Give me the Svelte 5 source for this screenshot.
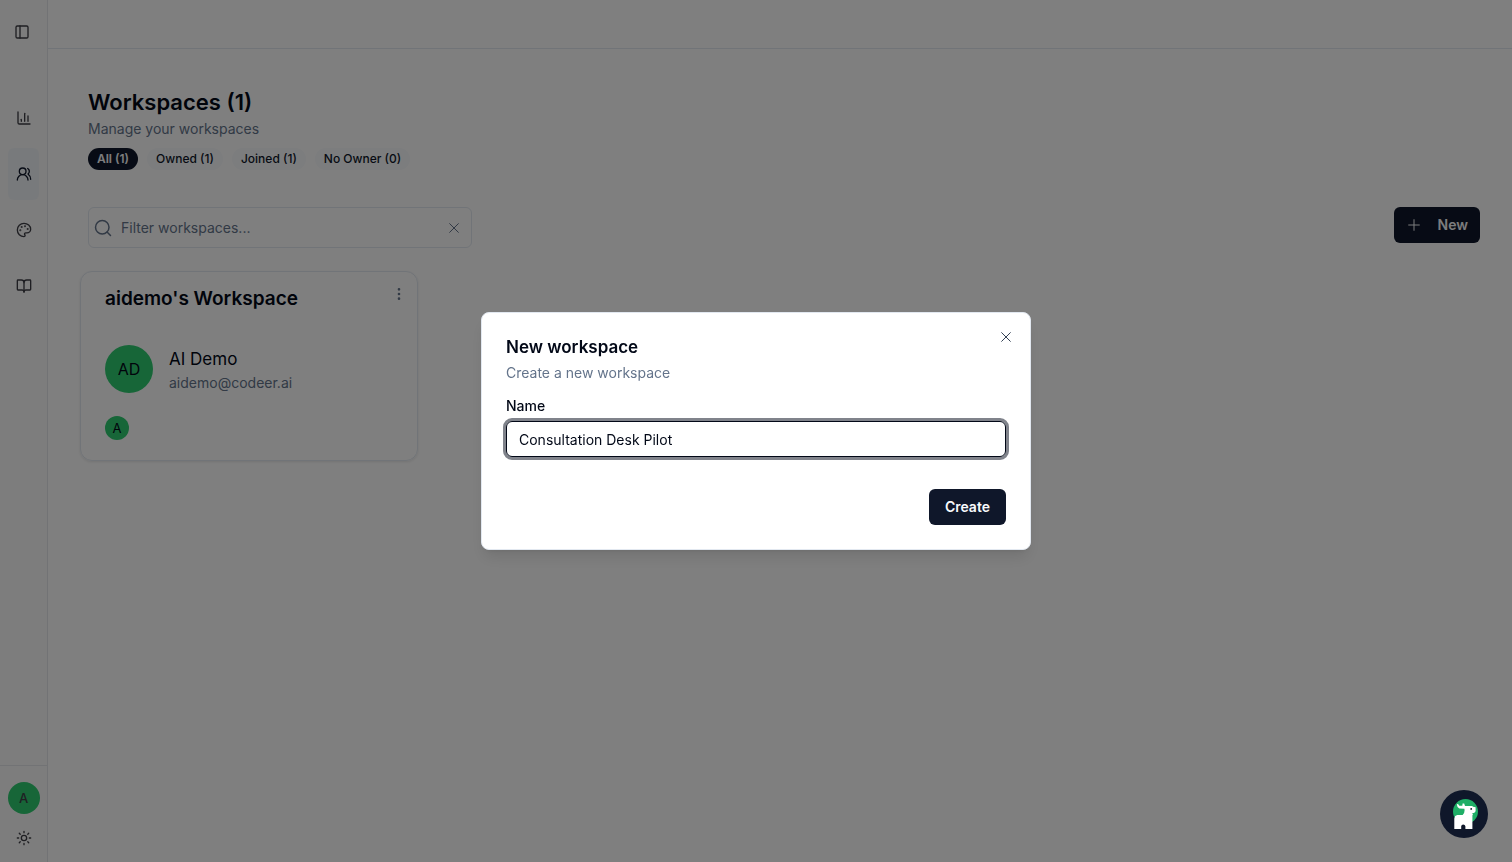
<script lang="ts">
    let filter = $state('');
    let name = $state('Consultation Desk Pilot');
    let open = $state(true);
    let active = $state('all');

    const chips = [
        { id: 'all', label: 'All', count: 1 },
        { id: 'owned', label: 'Owned', count: 1 },
        { id: 'joined', label: 'Joined', count: 1 },
        { id: 'none', label: 'No Owner', count: 0 },
    ];
</script>

{#snippet cross()}
    <svg class="icon thin" viewBox="0 0 24 24" aria-hidden="true"><path d="M18.500 5.500 5.500 18.500" /><path d="m5.500 5.500 13 13" /></svg>
{/snippet}

<div class="app">
    <aside class="sidebar">
        <button class="toggle" aria-label="Toggle sidebar">
            <svg class="icon" viewBox="0 0 24 24"><rect x="3" y="3" width="18" height="18" rx="2" /><path d="M9 3v18" /></svg>
        </button>
        <nav>
            <a href="#analytics" aria-label="Analytics">
                <svg class="icon" viewBox="0 0 24 24"><path d="M3 3v16a2 2 0 0 0 2 2h16" /><path d="M8 17v-3" /><path d="M13 17V5" /><path d="M18 17V9" /></svg>
            </a>
            <a href="#workspaces" class="current" aria-label="Workspaces">
                <svg class="icon" viewBox="0 0 24 24"><path d="M18 21a8 8 0 0 0-16 0" /><circle cx="10" cy="8" r="5" /><path d="M22 20c0-3.370-2-6.500-4-8a5 5 0 0 0-.450-8.300" /></svg>
            </a>
            <a href="#theme" aria-label="Appearance">
                <svg class="icon" viewBox="0 0 24 24"><g class="dots"><circle cx="13.500" cy="6.500" r=".5" /><circle cx="17.500" cy="10.500" r=".5" /><circle cx="8.500" cy="7.500" r=".5" /><circle cx="6.500" cy="12.500" r=".5" /></g><path d="M12 2C6.500 2 2 6.500 2 12s4.500 10 10 10c.926 0 1.648-.746 1.648-1.688 0-.437-.180-.835-.437-1.125-.290-.289-.438-.652-.438-1.125a1.640 1.640 0 0 1 1.668-1.668h1.996c3.051 0 5.555-2.503 5.555-5.554C21.965 6.012 17.461 2 12 2z" /></svg>
            </a>
            <a href="#docs" aria-label="Documentation">
                <svg class="icon" viewBox="0 0 24 24"><path d="M12 7v14" /><path d="M3 18a1 1 0 0 1-1-1V4a1 1 0 0 1 1-1h5a4 4 0 0 1 4 4 4 4 0 0 1 4-4h5a1 1 0 0 1 1 1v13a1 1 0 0 1-1 1h-6a3 3 0 0 0-3 3 3 3 0 0 0-3-3z" /></svg>
            </a>
        </nav>
        <footer>
            <button class="avatar medium" aria-label="Account">A</button>
            <button class="plain" aria-label="Toggle theme">
                <svg class="icon" viewBox="0 0 24 24"><circle cx="12" cy="12" r="4" /><path d="M12 2v2M12 20v2M4.930 4.930l1.410 1.410M17.660 17.660l1.410 1.410M2 12h2M20 12h2M6.340 17.660l-1.410 1.410M19.070 4.930l-1.410 1.410" /></svg>
            </button>
        </footer>
    </aside>

    <div class="page">
        <header class="topbar"></header>
        <main>
            <h1>Workspaces (1)</h1>
            <p class="subtitle">Manage your workspaces</p>
            <div class="chips">
                {#each chips as chip (chip.id)}
                    <button class="chip" class:selected={active === chip.id} onclick={() => (active = chip.id)}>{chip.label} ({chip.count})</button>
                {/each}
            </div>

            <div class="toolbar">
                <div class="search">
                    <svg class="icon large" viewBox="0 0 24 24"><circle cx="11" cy="11" r="9" /><path d="m22 22-4.600-4.600" /></svg>
                    <input type="text" placeholder="Filter workspaces..." aria-label="Filter workspaces" bind:value={filter} />
                    <button class="plain" aria-label="Clear filter" onclick={() => (filter = '')}>{@render cross()}</button>
                </div>
                <button class="primary new" onclick={() => (open = true)}>
                    <svg class="icon thin" viewBox="0 0 24 24"><path d="M4 12h16" /><path d="M12 4v16" /></svg>
                    New
                </button>
            </div>

            <div class="cards">
                <article class="card">
                    <div class="card-head">
                        <h2>aidemo's Workspace</h2>
                        <button class="plain more" aria-label="Workspace options">
                            <svg class="icon" viewBox="0 0 24 24"><circle cx="12" cy="12" r="1" /><circle cx="12" cy="5" r="1" /><circle cx="12" cy="19" r="1" /></svg>
                        </button>
                    </div>
                    <div class="owner">
                        <span class="avatar big">AD</span>
                        <div>
                            <p class="owner-name">AI Demo</p>
                            <p class="subtitle">aidemo@codeer.ai</p>
                        </div>
                    </div>
                    <span class="avatar small">A</span>
                </article>
            </div>
        </main>
    </div>
</div>

{#if open}
    <div class="overlay">
        <div class="dialog" role="dialog" aria-modal="true" aria-labelledby="dialog-title">
            <h2 id="dialog-title">New workspace</h2>
            <p class="subtitle">Create a new workspace</p>
            <form onsubmit={(e) => e.preventDefault()}>
                <label for="workspace-name">Name</label>
                <input id="workspace-name" type="text" autocomplete="off" spellcheck="false" bind:value={name} />
                <button class="primary create" type="submit">Create</button>
            </form>
            <button class="plain close" aria-label="Close" onclick={() => (open = false)}>{@render cross()}</button>
        </div>
    </div>
{/if}

<button class="chat" aria-label="Open chat">
    <svg viewBox="0 0 48 48">
        <circle cx="25.500" cy="21.500" r="12.500" fill="#1fae66" />
        <path fill="#fff" d="M16.800 14.300 18 14 19.400 15.800 22.300 15.800 22.600 13.400 24.200 13.400 25 16H32.200L33 16.800 35.600 17.300V21.300L34.400 22.700 31.700 23.400 33 24 32.400 25.500V39H25.400V36.200Q25 34.600 23.200 34.600 21.400 34.600 21.200 36.200V39H14.300V28.500Q14.600 25.600 17.300 25.100L22.600 24.900Q24.600 23.500 24.600 20.300L24.400 18.800 19.300 18.400Q17 17.500 16.800 14.300Z" />
        <circle cx="31.200" cy="18.900" r=".9" fill="#0f172a" />
    </svg>
</button>

<style>
    :global(body) {
        margin: 0;
        background: #fff;
        color: #020817;
        font-family: Inter, 'Liberation Sans', sans-serif;
        font-size: 14px;
        line-height: 20px;
    }
    h1, h2, p {
        margin: 0;
    }
    button, input {
        font: inherit;
        color: inherit;
        box-sizing: border-box;
    }
    button {
        padding: 0;
        border: 0;
        background: none;
        cursor: pointer;
    }
    .icon {
        display: block;
        width: 16px;
        height: 16px;
        flex: none;
        fill: none;
        stroke: currentColor;
        stroke-width: 2;
        stroke-linecap: round;
        stroke-linejoin: round;
    }
    .icon.large {
        width: 18px;
        height: 18px;
    }
    .icon.thin {
        stroke-width: 1.5;
    }
    .dots {
        fill: currentColor;
    }
    .app {
        display: flex;
        min-height: 100vh;
    }

    /* sidebar */
    .sidebar {
        box-sizing: border-box;
        width: 48px;
        flex: none;
        display: flex;
        flex-direction: column;
        background: #fafafa;
        border-right: 1px solid #e5e7eb;
        color: #3f3f46;
    }
    .toggle {
        display: grid;
        place-items: center;
        width: 28px;
        height: 28px;
        margin: 18px 8px 46px;
    }
    nav {
        display: flex;
        flex-direction: column;
        gap: 4px;
        padding: 0 8px;
        flex: 1;
    }
    nav a {
        display: grid;
        place-items: center;
        height: 52px;
        border-radius: 6px;
        color: inherit;
    }
    nav a.current {
        background: #f1f5f9;
        color: #0f172a;
    }
    footer {
        display: flex;
        flex-direction: column;
        align-items: center;
        gap: 16px;
        padding: 16px 0;
        border-top: 1px solid #e5e7eb;
    }
    .avatar {
        display: grid;
        place-items: center;
        flex: none;
        border-radius: 50%;
        background: #2ecc71;
        color: #020817;
    }
    .medium {
        width: 32px;
        height: 32px;
        color: #3f3f46;
        font-size: 13px;
        font-weight: 500;
    }
    .big {
        width: 48px;
        height: 48px;
        font-size: 16px;
    }
    .small {
        width: 24px;
        height: 24px;
        font-size: 13px;
    }

    /* page */
    .page {
        flex: 1;
        min-width: 0;
    }
    .topbar {
        height: 48px;
        border-bottom: 1px solid #e2e8f0;
    }
    main {
        padding: 37px 32px 32px 40px;
    }
    h1 {
        font-size: 22px;
        line-height: 32px;
        font-weight: 600;
    }
    .subtitle {
        color: #64748b;
    }
    h1 + .subtitle {
        margin-top: 1px;
    }
    .chips {
        display: flex;
        gap: 9px;
        margin-top: 9px;
    }
    .chip {
        height: 22px;
        padding: 0 9px;
        border-radius: 11px;
        background: #f8fafc;
        color: #0f172a;
        font-size: 12px;
        line-height: 16px;
        font-weight: 500;
    }
    .chip.selected {
        background: #0f172a;
        color: #f8fafc;
        font-weight: 600;
    }
    .toolbar {
        display: flex;
        justify-content: space-between;
        align-items: flex-start;
        margin-top: 37px;
    }
    .search {
        box-sizing: border-box;
        display: flex;
        align-items: center;
        gap: 9px;
        width: 384px;
        height: 41px;
        padding: 0 9px 0 5px;
        border: 1px solid #e2e8f0;
        border-radius: 6px;
        color: #64748b;
    }
    .search input {
        flex: 1;
        min-width: 0;
        padding: 0;
        border: 0;
        outline: none;
        background: none;
    }
    .search input::placeholder {
        color: #64748b;
        opacity: 1;
    }
    .primary {
        display: flex;
        align-items: center;
        height: 36px;
        border-radius: 6px;
        background: #0f172a;
        color: #f8fafc;
        font-weight: 600;
    }
    .new {
        gap: 16px;
        padding: 0 12px;
    }
    .cards {
        display: flex;
        flex-wrap: wrap;
        margin: 23px -8px 0;
    }
    .card {
        box-sizing: border-box;
        width: 338px;
        padding: 12px 24px 20px;
        border: 1px solid #e2e8f0;
        border-radius: 12px;
        box-shadow: 0 1px 3px rgba(0, 0, 0, 0.1);
    }
    .card-head {
        display: flex;
        justify-content: space-between;
        align-items: flex-start;
    }
    .card h2 {
        font-size: 19px;
        line-height: 30px;
        font-weight: 600;
    }
    .more {
        margin: 2px -14px 0 0;
        color: #64748b;
    }
    .owner {
        display: flex;
        align-items: center;
        gap: 16px;
        margin: 31px 0 23px;
    }
    .owner-name {
        font-size: 17px;
        line-height: 28px;
    }

    /* dialog */
    .overlay {
        position: fixed;
        inset: 0;
        display: flex;
        align-items: center;
        justify-content: center;
        background: rgba(0, 0, 0, 0.5);
    }
    .dialog {
        position: relative;
        box-sizing: border-box;
        width: 550px;
        max-width: 100%;
        padding: 24px;
        border: 1px solid #e2e8f0;
        border-radius: 8px;
        background: #fff;
        box-shadow: 0 10px 15px -3px rgba(0, 0, 0, 0.1), 0 4px 6px -4px rgba(0, 0, 0, 0.1);
    }
    .dialog h2 {
        font-size: 17px;
        line-height: 20px;
        font-weight: 600;
    }
    .dialog .subtitle {
        margin-top: 6px;
    }
    form {
        display: flex;
        flex-direction: column;
        margin-top: 13px;
    }
    label {
        font-weight: 500;
    }
    form input {
        height: 36px;
        margin-top: 5px;
        padding: 0 12px;
        border: 1px solid #020817;
        border-radius: 6px;
        outline: 3px solid rgba(2, 8, 23, 0.5);
        background: #fff;
    }
    .create {
        align-self: flex-end;
        margin-top: 32px;
        padding: 0 16px;
    }
    .close {
        position: absolute;
        top: 16px;
        right: 16px;
        color: #334155;
    }
    .chat {
        position: fixed;
        right: 24px;
        bottom: 24px;
        width: 48px;
        height: 48px;
        border-radius: 50%;
        background: #0f172a;
    }
    .chat svg {
        display: block;
        width: 48px;
        height: 48px;
    }
</style>
